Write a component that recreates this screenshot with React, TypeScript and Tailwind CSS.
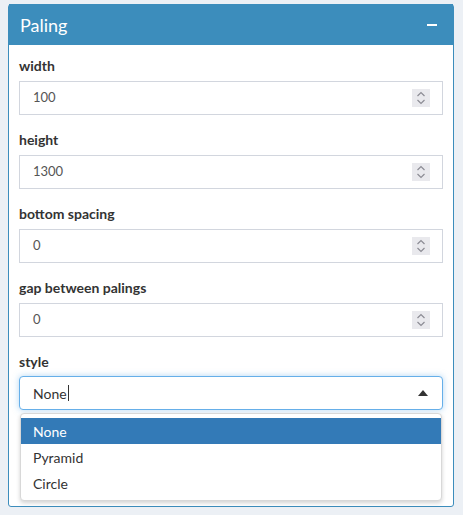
import React from "react";

function Spinner() {
  return (
    <div className="absolute right-[12px] top-1/2 -translate-y-1/2 w-[18px] h-[18px] bg-[#e9e9ed] flex items-center justify-center">
      <svg width="10" height="14" viewBox="0 0 10 14" fill="none" stroke="#8c8c94" strokeWidth="1.2">
        <polyline points="1.5,5 5,1.5 8.5,5" />
        <polyline points="1.5,9 5,12.5 8.5,9" />
      </svg>
    </div>
  );
}

function NumField({ label, value }: { label: string; value: string }) {
  return (
    <div className="mb-[15px]">
      <div className="h-[20px] leading-[20px] text-[14px] font-bold text-[#333] mb-[5px]">{label}</div>
      <div className="relative h-[34px] border border-[#d2d6de] bg-white flex items-center pl-[13px] text-[13px] text-[#555]">
        {value}
        <Spinner />
      </div>
    </div>
  );
}

export default function App() {
  return (
    <div className="w-[463px] h-[515px] bg-[#ecf0f5] pt-[4px] pl-[8px]" style={{ fontFamily: "Lato, 'Source Sans Pro', sans-serif" }}>
      <div className="w-[446px] border border-[#3c8dbc] rounded-[3px] bg-white">
        <div className="h-[41px] bg-[#3c8dbc] flex items-center justify-between pl-[11px] pr-[16px] -mt-px">
          <span className="text-[18px] text-white leading-none">Paling</span>
          <span className="block w-[10px] h-[2px] bg-white"></span>
        </div>
        <div className="px-[10px] pt-[11px] pb-[96px]">
          <NumField label="width" value="100" />
          <NumField label="height" value="1300" />
          <NumField label="bottom spacing" value="0" />
          <NumField label="gap between palings" value="0" />
          <div className="relative">
            <div className="h-[20px] leading-[20px] text-[14px] font-bold text-[#333] mb-[4px]">style</div>
            <div className="relative h-[34px] border border-[#66afe9] rounded-[4px] bg-white flex items-center pl-[13px] text-[14px] text-[#333] shadow-[0_0_6px_rgba(102,175,233,0.5)]">
              None<span className="inline-block w-px h-[16px] bg-[#333] ml-[1px]"></span>
              <svg className="absolute right-[14px] top-1/2 -translate-y-1/2" width="10" height="6" viewBox="0 0 10 6">
                <polygon points="0,6 5,0 10,6" fill="#333" />
              </svg>
            </div>
            <div className="absolute left-px right-px top-[61px] bg-white border border-[#d8d8d8] rounded-[4px] shadow-[0_2px_4px_rgba(0,0,0,0.18)] py-[4px] text-[14px] z-10">
              <div className="h-[26px] bg-[#337ab7] text-white flex items-center pl-[12px]">None</div>
              <div className="h-[26px] text-[#333] flex items-center pl-[12px]">Pyramid</div>
              <div className="h-[26px] text-[#333] flex items-center pl-[12px]">Circle</div>
            </div>
          </div>
        </div>
      </div>
    </div>
  );
}
